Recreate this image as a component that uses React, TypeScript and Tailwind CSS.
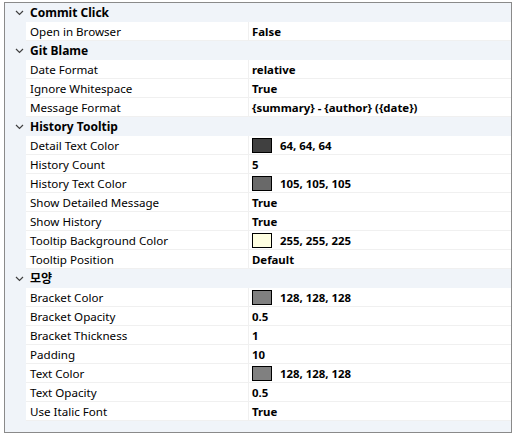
import React from "react";

type Prop = { name: string; value: string; color?: string };
type Cat = { title: string; props: Prop[] };

const data: Cat[] = [
  { title: "Commit Click", props: [{ name: "Open in Browser", value: "False" }] },
  {
    title: "Git Blame",
    props: [
      { name: "Date Format", value: "relative" },
      { name: "Ignore Whitespace", value: "True" },
      { name: "Message Format", value: "{summary} - {author} ({date})" },
    ],
  },
  {
    title: "History Tooltip",
    props: [
      { name: "Detail Text Color", value: "64, 64, 64", color: "#404040" },
      { name: "History Count", value: "5" },
      { name: "History Text Color", value: "105, 105, 105", color: "#696969" },
      { name: "Show Detailed Message", value: "True" },
      { name: "Show History", value: "True" },
      { name: "Tooltip Background Color", value: "255, 255, 225", color: "#ffffe1" },
      { name: "Tooltip Position", value: "Default" },
    ],
  },
  {
    title: "모양",
    props: [
      { name: "Bracket Color", value: "128, 128, 128", color: "#808080" },
      { name: "Bracket Opacity", value: "0.5" },
      { name: "Bracket Thickness", value: "1" },
      { name: "Padding", value: "10" },
      { name: "Text Color", value: "128, 128, 128", color: "#808080" },
      { name: "Text Opacity", value: "0.5" },
      { name: "Use Italic Font", value: "True" },
    ],
  },
];

function Chevron() {
  return (
    <svg width="9" height="6" viewBox="0 0 9 6" className="block">
      <path d="M1 1 L4.5 4.5 L8 1" fill="none" stroke="#404040" strokeWidth="1.2" />
    </svg>
  );
}

export default function App() {
  return (
    <div
      className="bg-white w-[514px] h-[437px] pt-[2px] pl-[4px]"
      style={{ fontFamily: '"Noto Sans", "Noto Sans CJK KR", sans-serif' }}
    >
      <div className="w-[508px] h-[431px] border border-[#8a8a8a] bg-[#f0f4f9] text-[11.6px] text-black leading-none">
        {data.map((cat) => (
          <div key={cat.title}>
            <div className="h-[19px] flex items-center pt-[1px]">
              <div className="w-[25px] flex justify-center pl-[3px]">
                <Chevron />
              </div>
              <span className="font-bold text-[12px]">{cat.title}</span>
            </div>
            {cat.props.map((p) => (
              <div key={p.name} className="h-[19px] flex pl-[21px]">
                <div className="flex-1 flex bg-white border-b border-[#f0f0f0]">
                  <div className="w-[223px] flex items-center pl-[4px] pt-[2px] border-r border-[#f0f0f0]">
                    {p.name}
                  </div>
                  <div className="flex-1 flex items-center pl-[3px] pt-[1px] font-bold text-[11.4px]">
                    {p.color && (
                      <span
                        className="w-[20px] h-[15px] border border-black mr-[8px] -mt-[1px]"
                        style={{ backgroundColor: p.color }}
                      />
                    )}
                    <span className="pt-[1px]">{p.value}</span>
                  </div>
                </div>
              </div>
            ))}
          </div>
        ))}
      </div>
    </div>
  );
}
